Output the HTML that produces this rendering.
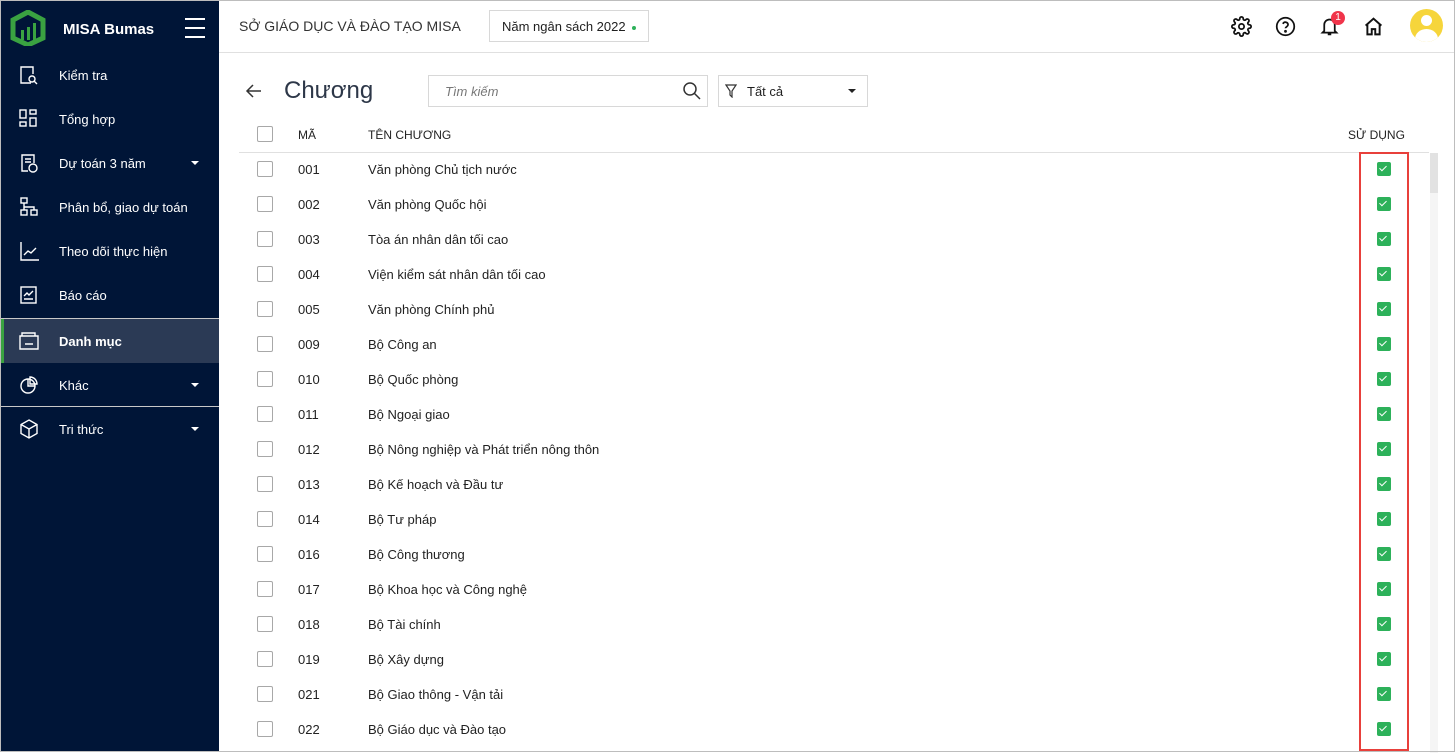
<!DOCTYPE html>
<html><head><meta charset="utf-8"><style>
*{box-sizing:border-box;margin:0;padding:0}
body{width:1455px;height:752px;overflow:hidden;font-family:"Liberation Sans",sans-serif;background:#fff;position:relative;font-size:13px;color:#1f1f1f}
.frame{position:absolute;inset:0;border:1px solid #bdbdbd;pointer-events:none;z-index:9}
.side{position:absolute;left:0;top:0;width:219px;height:752px;background:#001537;color:#fff}
.logo{position:absolute;left:10px;top:10px}
.brand{position:absolute;left:63px;top:21px;font-weight:bold;font-size:15px}
.ham{position:absolute;left:185px;top:18px;width:20px}
.ham i{display:block;height:2px;background:#fff;margin-bottom:7px}
.item{position:absolute;left:0;width:219px;height:44px;display:flex;align-items:center;font-size:13px}
.item svg{position:absolute;left:19px}
.item span{position:absolute;left:59px}
.item .car{position:absolute;left:191px;width:0;height:0;border-left:4px solid transparent;border-right:4px solid transparent;border-top:4px solid #fff}
.top{position:absolute;left:219px;top:0;right:0;height:53px;border-bottom:1px solid #e0e0e0}
.abs{position:absolute}
.cb{position:absolute;width:16px;height:16px;border:1px solid #a8a8a8;border-radius:2px;left:257px;background:#fff}
.gc{position:absolute;left:1377px;width:14px;height:14px;background:#2db15a;border-radius:2px}
.gc:after{content:"";position:absolute;left:4px;top:2px;width:3px;height:6px;border:solid #fff;border-width:0 1.5px 1.5px 0;transform:rotate(45deg)}
.row{position:absolute;font-size:13px;color:#222}
</style></head><body>
<div class="side">
 <svg class="logo" width="36" height="36" viewBox="0 0 36 36"><path d="M18 2 L33 10 L33 28 L18 35 L3 28 L3 10 Z" fill="none" stroke="#3aa241" stroke-width="5"/><rect x="11" y="20" width="3" height="10" fill="#3aa241"/><rect x="17" y="17" width="3" height="13" fill="#3aa241"/><rect x="23" y="13" width="3" height="17" fill="#3aa241"/></svg>
 <div class="brand">MISA Bumas</div>
 <div class="ham"><i></i><i></i><i></i></div>
 <div class="item" style="top:53px"><svg width="20" height="20" viewBox="0 0 20 20" fill="none" stroke="#fff" stroke-width="1.4"><path d="M12 18H2V2h12v7"/><circle cx="13" cy="14" r="3"/><path d="M15 16l3 3"/></svg><span>Kiểm tra</span></div>
 <div class="item" style="top:97px"><svg width="20" height="20" viewBox="0 0 20 20" fill="none" stroke="#fff" stroke-width="1.4"><rect x="1" y="1" width="6" height="8"/><rect x="11" y="1" width="6" height="4"/><rect x="1" y="13" width="6" height="4"/><rect x="11" y="9" width="6" height="8"/></svg><span>Tổng hợp</span></div>
 <div class="item" style="top:141px"><svg width="20" height="20" viewBox="0 0 20 20" fill="none" stroke="#fff" stroke-width="1.4"><path d="M9 18H3V2h12v8M6 6h6M6 9h6"/><circle cx="14" cy="15" r="4"/></svg><span>Dự toán 3 năm</span><i class="car"></i></div>
 <div class="item" style="top:185px"><svg width="20" height="20" viewBox="0 0 20 20" fill="none" stroke="#fff" stroke-width="1.4"><rect x="2" y="1" width="6" height="5"/><rect x="2" y="13" width="6" height="5"/><rect x="12" y="13" width="6" height="5"/><path d="M5 6v7M5 10h10v3"/></svg><span>Phân bổ, giao dự toán</span></div>
 <div class="item" style="top:229px"><svg width="20" height="20" viewBox="0 0 20 20" fill="none" stroke="#fff" stroke-width="1.4"><path d="M2 1v18h18M5 14l4-4 3 2 5-5"/></svg><span>Theo dõi thực hiện</span></div>
 <div class="item" style="top:273px"><svg width="20" height="20" viewBox="0 0 20 20" fill="none" stroke="#fff" stroke-width="1.4"><rect x="2" y="2" width="15" height="16"/><path d="M5 11l3-3 2 2 4-4M5 14h9"/></svg><span>Báo cáo</span></div>
 <div class="abs" style="left:0;top:318px;width:219px;height:1px;background:#c8c8c8"></div>
 <div class="item" style="top:319px;background:#2b3a55;font-weight:bold"><div class="abs" style="left:0;top:0;width:4px;height:44px;background:#3aa241"></div><svg width="20" height="20" viewBox="0 0 20 20" fill="none" stroke="#fff" stroke-width="1.4"><path d="M1 5h18v13H1zM3 5V2h13v3M6 13h8"/></svg><span>Danh mục</span></div>
 <div class="item" style="top:363px"><svg width="20" height="20" viewBox="0 0 20 20" fill="none" stroke="#fff" stroke-width="1.4"><circle cx="9" cy="11" r="7"/><path d="M9 4v7h7M11 2a7 7 0 0 1 7 7h-7z"/></svg><span>Khác</span><i class="car"></i></div>
 <div class="abs" style="left:0;top:406px;width:219px;height:1px;background:#c8c8c8"></div>
 <div class="item" style="top:407px"><svg width="20" height="20" viewBox="0 0 20 20" fill="none" stroke="#fff" stroke-width="1.4"><path d="M10 1l8 4.5v9L10 19l-8-4.5v-9zM2 5.5l8 4.5 8-4.5M10 10v9"/></svg><span>Tri thức</span><i class="car"></i></div>
</div>
<div class="top">
 <div class="abs" style="left:20px;top:18px;font-size:14px;color:#333">SỞ GIÁO DỤC VÀ ĐÀO TẠO MISA</div>
 <div class="abs" style="left:270px;top:10px;width:160px;height:32px;border:1px solid #d8d8d8;font-size:13px;padding:8px 0 0 12px">Năm ngân sách 2022 <span style="display:inline-block;width:4px;height:4px;border-radius:50%;background:#2db15a;vertical-align:middle;margin-left:3px"></span></div>
 <svg class="abs" style="left:1012px;top:16px" width="21" height="21" viewBox="0 0 24 24" fill="none" stroke="#111" stroke-width="2"><circle cx="12" cy="12" r="3"/><path d="M19.4 15a1.7 1.7 0 0 0 .3 1.8l.1.1a2 2 0 1 1-2.8 2.8l-.1-.1a1.7 1.7 0 0 0-2.9 1.2V21a2 2 0 1 1-4 0v-.1a1.7 1.7 0 0 0-2.9-1.2l-.1.1a2 2 0 1 1-2.8-2.8l.1-.1a1.7 1.7 0 0 0-1.2-2.9H3a2 2 0 1 1 0-4h.1a1.7 1.7 0 0 0 1.2-2.9l-.1-.1a2 2 0 1 1 2.8-2.8l.1.1A1.7 1.7 0 0 0 10 3.1V3a2 2 0 1 1 4 0v.1a1.7 1.7 0 0 0 2.9 1.2l.1-.1a2 2 0 1 1 2.8 2.8l-.1.1a1.7 1.7 0 0 0 1.2 2.9H21a2 2 0 1 1 0 4h-.1a1.7 1.7 0 0 0-1.5 1z"/></svg>
 <svg class="abs" style="left:1056px;top:16px" width="21" height="21" viewBox="0 0 24 24" fill="none" stroke="#111" stroke-width="2"><circle cx="12" cy="12" r="10"/><path d="M9.1 9a3 3 0 0 1 5.8 1c0 2-3 2.5-3 4"/><circle cx="12" cy="17.5" r=".6" fill="#111"/></svg>
 <svg class="abs" style="left:1100px;top:16px" width="21" height="21" viewBox="0 0 24 24" fill="none" stroke="#111" stroke-width="2"><path d="M6 17V10a6 6 0 0 1 12 0v7l2 2H4zM10 21h4"/></svg>
 <div class="abs" style="left:1112px;top:11px;width:14px;height:14px;border-radius:50%;background:#f0344a;color:#fff;font-size:10px;text-align:center;line-height:14px">1</div>
 <svg class="abs" style="left:1144px;top:16px" width="21" height="21" viewBox="0 0 24 24" fill="none" stroke="#111" stroke-width="2.2"><path d="M3 11l9-8 9 8M5 9v12h5v-6h4v6h5V9"/></svg>
 <div class="abs" style="left:1191px;top:9px;width:33px;height:33px;border-radius:50%;background:#f6d53b;overflow:hidden"><div class="abs" style="left:11px;top:6px;width:11px;height:11px;border-radius:50%;background:#fff"></div><div class="abs" style="left:5px;top:20px;width:23px;height:20px;border-radius:50%;background:#fff"></div></div>
</div>
<svg class="abs" style="left:245px;top:83px" width="18" height="16" viewBox="0 0 18 16" fill="none" stroke="#333" stroke-width="1.5"><path d="M16 8H2M8 2L2 8l6 6"/></svg>
<div class="abs" style="left:284px;top:77px;font-size:24px;color:#2d3748">Chương</div>
<div class="abs" style="left:428px;top:75px;width:280px;height:32px;border:1px solid #d8d8d8;font-style:italic;color:#777;font-size:13px;padding:8px 0 0 16px">Tìm kiếm</div>
<svg class="abs" style="left:682px;top:81px" width="19" height="19" viewBox="0 0 19 19" fill="none" stroke="#333" stroke-width="1.5"><circle cx="8" cy="8" r="6"/><path d="M12.5 12.5L18 18"/></svg>
<div class="abs" style="left:718px;top:75px;width:150px;height:32px;border:1px solid #d8d8d8;font-size:13px;padding:8px 0 0 28px">Tất cả</div>
<svg class="abs" style="left:725px;top:84px" width="12" height="14" viewBox="0 0 12 14" fill="none" stroke="#333" stroke-width="1.2"><path d="M1 1h10L7 7v6L5 11V7z"/></svg>
<div class="abs" style="left:848px;top:89px;border-left:4px solid transparent;border-right:4px solid transparent;border-top:4px solid #222"></div>
<div class="cb" style="top:126px"></div>
<div class="row" style="left:298px;top:128px;font-size:12px">MÃ</div>
<div class="row" style="left:368px;top:128px;font-size:12px">TÊN CHƯƠNG</div>
<div class="row" style="left:1348px;top:128px;font-size:12px">SỬ DỤNG</div>
<div class="abs" style="left:239px;top:152px;width:1190px;height:1px;background:#e0e0e0"></div>
<div class="abs" style="left:1430px;top:153px;width:8px;height:600px;background:#f5f5f5"></div>
<div class="abs" style="left:1430px;top:153px;width:8px;height:40px;background:#e2e2e2"></div>
<div id="rows"></div>
<div class="abs" style="left:1359px;top:152px;width:50px;height:599px;border:2px solid #e8403b"></div>
<script>
var d=[["001","Văn phòng Chủ tịch nước"],["002","Văn phòng Quốc hội"],["003","Tòa án nhân dân tối cao"],["004","Viện kiểm sát nhân dân tối cao"],["005","Văn phòng Chính phủ"],["009","Bộ Công an"],["010","Bộ Quốc phòng"],["011","Bộ Ngoại giao"],["012","Bộ Nông nghiệp và Phát triển nông thôn"],["013","Bộ Kế hoạch và Đầu tư"],["014","Bộ Tư pháp"],["016","Bộ Công thương"],["017","Bộ Khoa học và Công nghệ"],["018","Bộ Tài chính"],["019","Bộ Xây dựng"],["021","Bộ Giao thông - Vận tải"],["022","Bộ Giáo dục và Đào tạo"]];
var h="";d.forEach(function(r,i){var y=169+35*i;h+='<div class="cb" style="top:'+(y-8)+'px"></div><div class="row" style="left:298px;top:'+(y-7)+'px">'+r[0]+'</div><div class="row" style="left:368px;top:'+(y-7)+'px">'+r[1]+'</div><div class="gc" style="top:'+(y-7)+'px"></div>';});
document.getElementById("rows").innerHTML=h;
</script>
<div class="frame"></div>
</body></html>
